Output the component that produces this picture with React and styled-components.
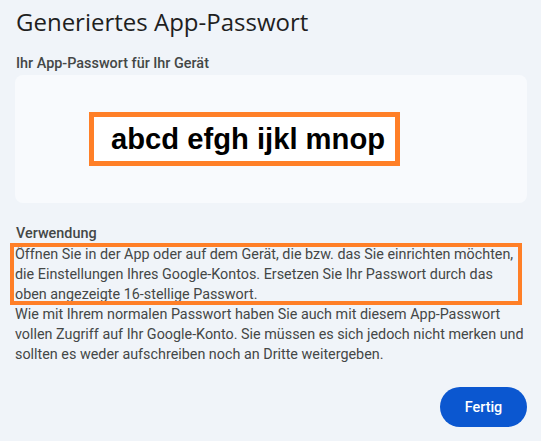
import styled, { createGlobalStyle } from 'styled-components';

const GlobalStyle = createGlobalStyle`
  html, body {
    margin: 0;
    padding: 0;
    background: #f0f4f9;
  }
  body {
    font-family: Roboto, "Liberation Sans", Arial, sans-serif;
    color: #444746;
  }
`;

const Page = styled.div`
  width: 541px;
  height: 441px;
  box-sizing: border-box;
  padding: 6px 14px 0 15px;
  display: flex;
  flex-direction: column;
  background: #f0f4f9;
`;

const Title = styled.h1`
  margin: 0 0 0 1px;
  font-family: "Open Sans", sans-serif;
  font-weight: 400;
  font-size: 24px;
  line-height: 32px;
  color: #1f1f1f;
`;

const Label = styled.div`
  margin: ${({ $top }) => $top}px 0 1px 1px;
  font-size: 14.4px;
  font-weight: 500;
  line-height: 20px;
  color: #444746;
`;

const Card = styled.div`
  height: 128px;
  border-radius: 8px;
  background: #f8fafd;
  display: flex;
  align-items: center;
  padding-left: 74px;
`;

const PasswordBox = styled.div`
  height: 44px;
  display: flex;
  align-items: center;
  padding: 0 10px 0 17px;
  background: #ffffff;
  border: 5px solid #ff7f27;
  font-family: "Liberation Sans", Arial, sans-serif;
  font-weight: 700;
  font-size: 29.2px;
  color: #000;
`;

const Text = styled.p`
  position: relative;
  margin: 0;
  font-size: 14.35px;
  line-height: 20px;
  color: #444746;
  white-space: nowrap;

  ${({ $marked }) => $marked && `
    &::after {
      content: "";
      position: absolute;
      left: -5px;
      right: 5px;
      top: -2px;
      bottom: 0;
      border: 4px solid #ff7f27;
      pointer-events: none;
    }
  `}
`;

const Footer = styled.div`
  display: flex;
  justify-content: flex-end;
  margin-top: 22px;
`;

const Button = styled.button`
  height: 40px;
  width: 87px;
  border: none;
  border-radius: 20px;
  background: #0b57d0;
  color: #fff;
  font-family: Roboto, sans-serif;
  font-weight: 500;
  font-size: 14.4px;
  cursor: pointer;
`;

export default function App() {
  return (
    <>
      <GlobalStyle />
      <Page>
        <Title>Generiertes App-Passwort</Title>
        <Label $top={16}>Ihr App-Passwort für Ihr Gerät</Label>
        <Card>
          <PasswordBox>abcd efgh ijkl mnop</PasswordBox>
        </Card>
        <Label $top={21}>Verwendung</Label>
        <Text $marked>
          Öffnen Sie in der App oder auf dem Gerät, die bzw. das Sie einrichten möchten,
          <br />
          die Einstellungen Ihres Google-Kontos. Ersetzen Sie Ihr Passwort durch das
          <br />
          oben angezeigte 16-stellige Passwort.
        </Text>
        <Text>
          Wie mit Ihrem normalen Passwort haben Sie auch mit diesem App-Passwort
          <br />
          vollen Zugriff auf Ihr Google-Konto. Sie müssen es sich jedoch nicht merken und
          <br />
          sollten es weder aufschreiben noch an Dritte weitergeben.
        </Text>
        <Footer>
          <Button>Fertig</Button>
        </Footer>
      </Page>
    </>
  );
}
